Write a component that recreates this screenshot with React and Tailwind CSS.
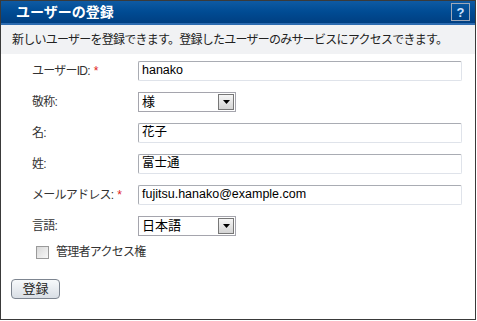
import React from 'react';

const FONT = { fontFamily: '"Liberation Sans", Arial, "Noto Sans CJK JP", sans-serif' };

function Label({ text, required }) {
  return (
    <div className="w-[106px] shrink-0 text-[12px] tracking-[-0.75px] text-[#333] whitespace-nowrap">
      {text}
      {required && <span className="text-[#e02020] ml-[4px]">*</span>}
    </div>
  );
}

function TextField({ value }) {
  return (
    <div className="w-[324px] h-[20px] border border-[#a9acb3] border-b-[#dfe3ea] border-r-[#dfe3ea] rounded-[2px] bg-white px-[3px] flex items-center text-[12.5px] text-black">
      {value}
    </div>
  );
}

function SelectField({ value }) {
  return (
    <div className="w-[98px] h-[20px] border border-[#a5a5ad] bg-white flex items-center">
      <div className="flex-1 px-[3px] text-[13px] text-black leading-none">{value}</div>
      <div className="w-[16px] h-[16px] mr-[1px] border border-[#777] bg-gradient-to-b from-[#f6f6f6] to-[#d4d4d4] flex items-center justify-center">
        <svg width="7" height="4" viewBox="0 0 7 4">
          <path d="M0 0h7L3.5 4z" fill="#000" />
        </svg>
      </div>
    </div>
  );
}

function Row({ children }) {
  return <div className="flex items-center h-[31px] pl-[31px]">{children}</div>;
}

export default function App() {
  return (
    <div className="w-[477px] h-[321px] bg-white" style={FONT}>
      <div className="w-[476px] h-[320px] border border-[#3a3a3a] flex flex-col">
        <div className="h-[24px] shrink-0 bg-gradient-to-b from-[#0f5aa3] via-[#004b93] to-[#003f82] border-b-[2px] border-b-[#2c6bb0] flex items-center justify-between pl-[15px] pr-[5px]">
          <span className="text-white font-bold text-[14px]">ユーザーの登録</span>
          <div className="w-[19px] h-[18px] border border-[#a0a8b8] flex items-center justify-center text-[#cfe3ff] text-[13px] font-bold leading-none">?</div>
        </div>
        <div className="h-[29px] shrink-0 bg-[#f1f2f4] flex items-center pl-[11px] pt-[1px] text-[12px] tracking-[-0.75px] text-[#222] whitespace-nowrap">
          新しいユーザーを登録できます。登録したユーザーのみサービスにアクセスできます。
        </div>
        <div className="pt-[1px]">
          <Row><Label text="ユーザーID:" required /><TextField value="hanako" /></Row>
          <Row><Label text="敬称:" /><SelectField value="様" /></Row>
          <Row><Label text="名:" /><TextField value="花子" /></Row>
          <Row><Label text="姓:" /><TextField value="富士通" /></Row>
          <Row><Label text="メールアドレス:" required /><TextField value="fujitsu.hanako@example.com" /></Row>
          <Row><Label text="言語:" /><SelectField value="日本語" /></Row>
          <div className="flex items-center h-[22px] pl-[35px] gap-[7px] text-[12px] tracking-[-0.75px] text-[#333]">
            <div className="w-[13px] h-[13px] border border-[#9a9a9a] bg-gradient-to-br from-[#d8d8d8] to-[#f8f8f8]" />
            <span>管理者アクセス権</span>
          </div>
          <div className="pl-[10px] pt-[16px]">
            <div className="w-[49px] h-[20px] rounded-[4px] border border-[#7d8590] bg-gradient-to-b from-[#f7f9fb] to-[#d9dee5] flex items-center justify-center text-[13px] text-[#222]">
              登録
            </div>
          </div>
        </div>
      </div>
    </div>
  );
}
